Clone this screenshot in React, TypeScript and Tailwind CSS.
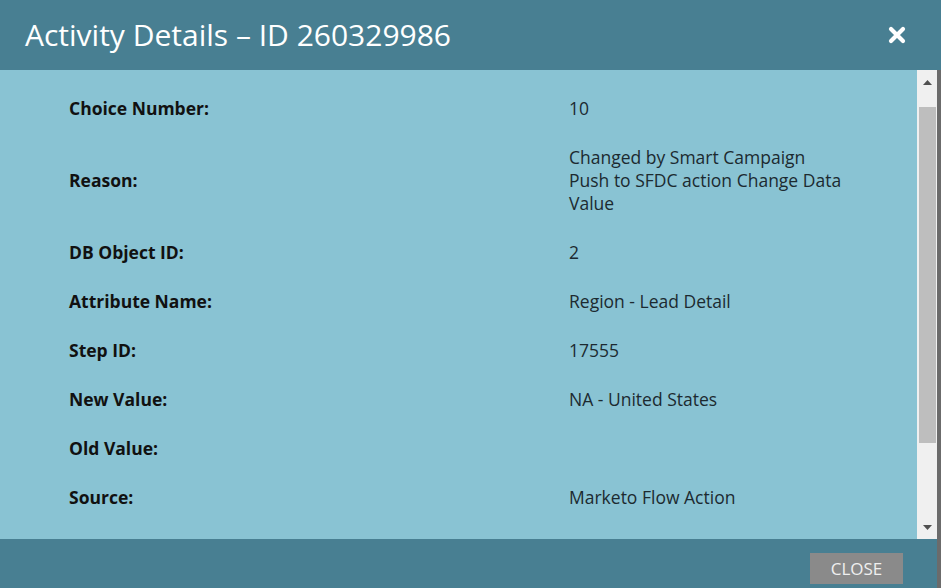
const rows: { label: string; value: string }[] = [
  { label: 'Choice Number:', value: '10' },
  { label: 'Reason:', value: 'Changed by Smart Campaign Push to SFDC action Change Data Value' },
  { label: 'DB Object ID:', value: '2' },
  { label: 'Attribute Name:', value: 'Region - Lead Detail' },
  { label: 'Step ID:', value: '17555' },
  { label: 'New Value:', value: 'NA - United States' },
  { label: 'Old Value:', value: '' },
  { label: 'Source:', value: 'Marketo Flow Action' },
]

function Scrollbar() {
  return (
    <div className="w-[20px] bg-[#f0f0f0] flex flex-col items-center">
      <div className="h-[22px] w-full flex items-center justify-center pt-[3px]">
        <svg width="9" height="5" viewBox="0 0 9 5">
          <path d="M0 5 L4.5 0 L9 5 Z" fill="#505050" />
        </svg>
      </div>
      <div className="h-[15px]" />
      <div className="w-[17px] h-[336px] bg-[#bebebe]" />
      <div className="flex-1" />
      <div className="h-[22px] w-full flex items-center justify-center pb-[2px]">
        <svg width="9" height="5" viewBox="0 0 9 5">
          <path d="M0 0 L9 0 L4.5 5 Z" fill="#505050" />
        </svg>
      </div>
    </div>
  )
}

export default function App() {
  return (
    <div
      className="w-[941px] h-[588px] flex flex-col overflow-hidden"
      style={{ fontFamily: '"Open Sans", "Noto Sans", sans-serif' }}
    >
      <div className="h-[70px] bg-[#487f92] flex items-center justify-between pl-[25px] pr-[35px]">
        <h1 className="text-white text-[30px] leading-none pb-[1px]">Activity Details – ID 260329986</h1>
        <svg width="18" height="18" viewBox="0 0 18 18">
          <path d="M3 3 L15 15 M15 3 L3 15" stroke="white" strokeWidth="4.2" strokeLinecap="round" />
        </svg>
      </div>
      <div className="flex-1 flex min-h-0">
        <div className="flex-1 flex flex-col min-h-0">
          <div className="flex-1 flex min-h-0">
            <div className="flex-1 bg-[#89c3d3] pt-[14px]">
              {rows.map(r => (
                <div key={r.label} className="flex items-center py-[13px]">
                  <div className="w-[569px] pl-[69px] text-[17.5px] font-bold text-[#111] leading-[23px]">
                    {r.label}
                  </div>
                  <div className="w-[276px] text-[17.5px] text-[#1c2a30] leading-[23px] min-h-[23px]">
                    {r.value}
                  </div>
                </div>
              ))}
            </div>
            <Scrollbar />
          </div>
          <div className="h-[49px] bg-[#487f92] flex items-center justify-end pr-[34px] pt-[10px]">
            <button className="w-[93px] h-[31px] bg-[#8a8a8a] text-[#efefef] text-[17px] leading-none">
              CLOSE
            </button>
          </div>
        </div>
        <div className="w-[4px] bg-[#6b6b6b]" />
      </div>
    </div>
  )
}
